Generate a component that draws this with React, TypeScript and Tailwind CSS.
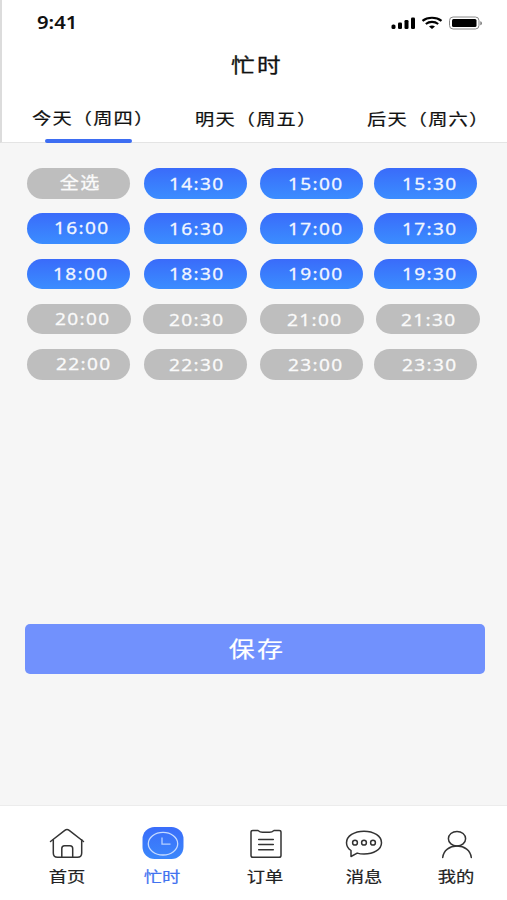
import React from 'react';
import clsx from 'clsx';

type Slot = {
  label: string;
  busy?: boolean;
  box?: string;
  text?: string;
};

const slots: Slot[] = [
  { label: '全选', text: 'left-px -top-px tracking-[0.5px]' },
  { label: '14:30', busy: true, text: 'left-[1.5px]' },
  { label: '15:00', busy: true, text: 'left-[3.5px]' },
  { label: '15:30', busy: true, text: 'left-[3.5px]' },
  { label: '16:00', busy: true, text: 'left-[3px] -top-px' },
  { label: '16:30', busy: true, text: 'left-[1.5px]' },
  { label: '17:00', busy: true, text: 'left-[3.5px]' },
  { label: '17:30', busy: true, text: 'left-[3.5px]' },
  { label: '18:00', busy: true, text: 'left-[2px]' },
  { label: '18:30', busy: true, text: 'left-[1.5px]' },
  { label: '19:00', busy: true, text: 'left-[3.5px]' },
  { label: '19:30', busy: true, text: 'left-[3.5px]' },
  { label: '20:00', box: 'w-[104px]', text: 'left-[3.5px] -top-px' },
  { label: '20:30', box: 'w-[104px] -ml-px', text: 'left-[1.5px]' },
  { label: '21:00', box: 'w-[104px]', text: 'left-[2.5px]' },
  { label: '21:30', box: 'w-[104px] ml-[1.5px]', text: 'left-px' },
  { label: '22:00', text: 'left-[5px] -top-px' },
  { label: '22:30', text: 'left-[1.5px]' },
  { label: '23:00', text: 'left-[3.5px]' },
  { label: '23:30', text: 'left-[3.5px]' },
];

const StatusBar = () => (
  <div className="flex h-[46px] items-center justify-between pl-[35px] pr-[24px]">
    <span className="mb-[2px] origin-left scale-x-[1.19] text-[17px] font-semibold leading-none">9:41</span>
    <svg width="92" height="14" viewBox="0 0 92 14" fill="none">
      <rect x="0.5" y="8.5" width="4" height="4.5" rx="1.6" fill="#000" />
      <rect x="7" y="6.5" width="4" height="6.5" rx="1.3" fill="#000" />
      <rect x="13.5" y="4" width="4" height="9" rx="1.3" fill="#000" />
      <rect x="20" y="1.5" width="4" height="11.5" rx="1.3" fill="#000" />
      <path d="M31.5 4.8C36.7.7 45.3.7 50.5 4.8" stroke="#000" strokeWidth="2.2" />
      <path d="M34.8 8C38.4 5.2 43.6 5.2 47.2 8" stroke="#000" strokeWidth="2.1" />
      <path d="M38 10.5C39.6 9 42.4 9 44 10.5L41 13Z" fill="#000" />
      <rect x="58.5" y="1" width="29.5" height="12" rx="3.6" stroke="#888" />
      <rect x="61" y="3" width="24.5" height="8" rx="1.5" fill="#000" />
      <path d="M89.5 5.2c1.6.5 1.6 3.6 0 4.1Z" fill="#444" />
    </svg>
  </div>
);

const Header = () => (
  <header className="h-[143px] border-b border-[#e4e4e4] border-l-2 border-l-[#dcdcdc] bg-white">
    <StatusBar />
    <h1 className="flex h-[38px] items-center justify-center pl-[4px] pt-[2px] text-[20px] leading-none [-webkit-text-stroke:0.3px]">
      <span className="inline-block scale-x-[1.18] tracking-[2px]">忙时</span>
    </h1>
    <nav className="flex h-[58px] pl-[29.5px] text-[16px] leading-none [-webkit-text-stroke:0.2px]">
      <div className="w-[163.5px] pt-[26px]">
        <span className="inline-block origin-left scale-x-[1.2] whitespace-nowrap tracking-[1px]">今天（周四）</span>
        <div className="ml-[13px] mt-[13px] h-[4px] w-[87.5px] rounded-[2px] bg-[#3d6df2]" />
      </div>
      <div className="w-[171.5px] pt-[27px]">
        <span className="inline-block origin-left scale-x-[1.2] whitespace-nowrap tracking-[1px]">明天（周五）</span>
      </div>
      <div className="pt-[27px]">
        <span className="inline-block origin-left scale-x-[1.2] whitespace-nowrap tracking-[1px]">后天（周六）</span>
      </div>
    </nav>
  </header>
);

const TimeSlot = ({ label, busy, box, text }: Slot) => (
  <button
    className={clsx(
      'flex h-[30.5px] items-center justify-center rounded-full text-[17px] leading-none [-webkit-text-stroke:0.3px]',
      busy ? 'bg-linear-to-b from-[#3a6bfa] to-[#3b8dff] text-[#f1f6ff]' : 'bg-[#bebebe] text-[#fafafa]',
      box ?? 'w-[103px]',
    )}
  >
    <span className={clsx('relative inline-block scale-x-[1.12] tracking-[1.2px]', text)}>{label}</span>
  </button>
);

const HomeIcon = () => (
  <svg width="36" height="32" viewBox="0 0 36 32" fill="none" stroke="#333" strokeWidth="1.5" strokeLinecap="round" strokeLinejoin="round">
    <path d="M1.5 14.5 15.8 3.3Q18 1.7 20.2 3.3L34.5 14.5" />
    <path d="M4.3 12.8V26Q4.3 30.3 8.5 30.3H28.5Q32.7 30.3 32.7 26V12.8" />
    <path d="M12.8 30V21.5Q12.8 18.7 15.5 18.7H21Q23.7 18.7 23.7 21.5V30" />
  </svg>
);

const ClockIcon = () => (
  <svg width="42" height="32" viewBox="0 0 42 32" fill="none">
    <defs>
      <linearGradient id="clock" x1="0" y1="0" x2="0" y2="1">
        <stop stopColor="#3a6dfa" />
        <stop offset="1" stopColor="#3b87fb" />
      </linearGradient>
    </defs>
    <rect x="0.5" y="0" width="41" height="32" rx="12" fill="url(#clock)" />
    <ellipse cx="21" cy="16.7" rx="14.7" ry="11.3" stroke="#c5daff" strokeWidth="1.3" />
    <path d="M20 10.5V17.2H28.5" stroke="#b5d0ff" strokeWidth="1.3" />
  </svg>
);

const OrderIcon = () => (
  <svg width="34" height="32" viewBox="0 0 34 32" fill="none" stroke="#333" strokeWidth="1.5" strokeLinecap="round" strokeLinejoin="round">
    <path d="M9 3.5H3.8Q2 3.5 2 5.2V28.5Q2 30.3 4 30.3H30Q32 30.3 32 28.5V5.2Q32 3.5 30.2 3.5H25Q23 5.2 20.5 5.2H13.5Q11 5.2 9 3.5Z" />
    <path d="M9.7 12.4H24.3M9.7 17.5H24.3M9.7 22.7H24.3" />
  </svg>
);

const MessageIcon = () => (
  <svg width="38" height="32" viewBox="0 0 38 32" fill="none" stroke="#333" strokeWidth="1.5" strokeLinejoin="round">
    <path d="M6 23.5C3 21.5 1.5 18.8 1.5 15.7C1.5 9 9.3 4.2 19 4.2S36.5 9 36.5 15.7S28.7 27 19 27C16.5 27 14.2 26.7 12.2 26.1L6 29.5Z" />
    <circle cx="10" cy="15.7" r="2.4" />
    <circle cx="19" cy="15.7" r="2.4" />
    <circle cx="28" cy="15.7" r="2.4" />
  </svg>
);

const MineIcon = () => (
  <svg width="34" height="32" viewBox="0 0 34 32" fill="none" stroke="#333" strokeWidth="1.5" strokeLinecap="round">
    <ellipse cx="17" cy="11.7" rx="8.6" ry="7.3" />
    <path d="M2.7 30.5C3.5 23.2 9.5 19.1 17 19.1S30.5 23.2 31.3 30.5" />
  </svg>
);

const menus = [
  { label: '首页', icon: <HomeIcon />, box: 'w-[95px]' },
  { label: '忙时', icon: <ClockIcon />, box: 'w-[96px]', active: true },
  { label: '订单', icon: <OrderIcon />, box: 'w-[110px]' },
  { label: '消息', icon: <MessageIcon />, box: 'w-[87px]' },
  { label: '我的', icon: <MineIcon />, box: 'w-[98px]' },
];

const TabBar = () => (
  <footer className="flex h-[95px] border-t border-[#ececec] bg-white pl-[19.5px] pt-[21px]">
    {menus.map((item) => (
      <div key={item.label} className={clsx('flex flex-col items-center', item.box)}>
        {item.icon}
        <span
          className={clsx(
            'mt-[10px] inline-block scale-x-[1.22] text-[15px] leading-none [-webkit-text-stroke:0.2px]',
            item.active ? 'text-[#4272f0]' : 'text-[#222]',
          )}
        >
          {item.label}
        </span>
      </div>
    ))}
  </footer>
);

const App = () => {
  return (
    <div className="flex h-[900px] w-[507px] flex-col overflow-hidden bg-[#f6f6f6] font-['Noto_Sans','Noto_Sans_CJK_SC',sans-serif] text-[#111]">
      <Header />
      <main className="flex-1 pt-[25px]">
        <div className="grid grid-cols-[116.5px_116.5px_114px_106px] gap-y-[14.8px] pl-[27.3px]">
          {slots.map((slot) => (
            <TimeSlot key={slot.label} {...slot} />
          ))}
        </div>
        <button className="ml-[25px] mt-[244.5px] flex h-[50px] w-[459.5px] items-center justify-center rounded-[5px] bg-[#7191fd] text-[22px] leading-none text-white [-webkit-text-stroke:0.2px]">
          <span className="relative left-[2.5px] -top-px inline-block scale-x-[1.18] tracking-[2px]">保存</span>
        </button>
      </main>
      <TabBar />
    </div>
  );
};

export default App;
